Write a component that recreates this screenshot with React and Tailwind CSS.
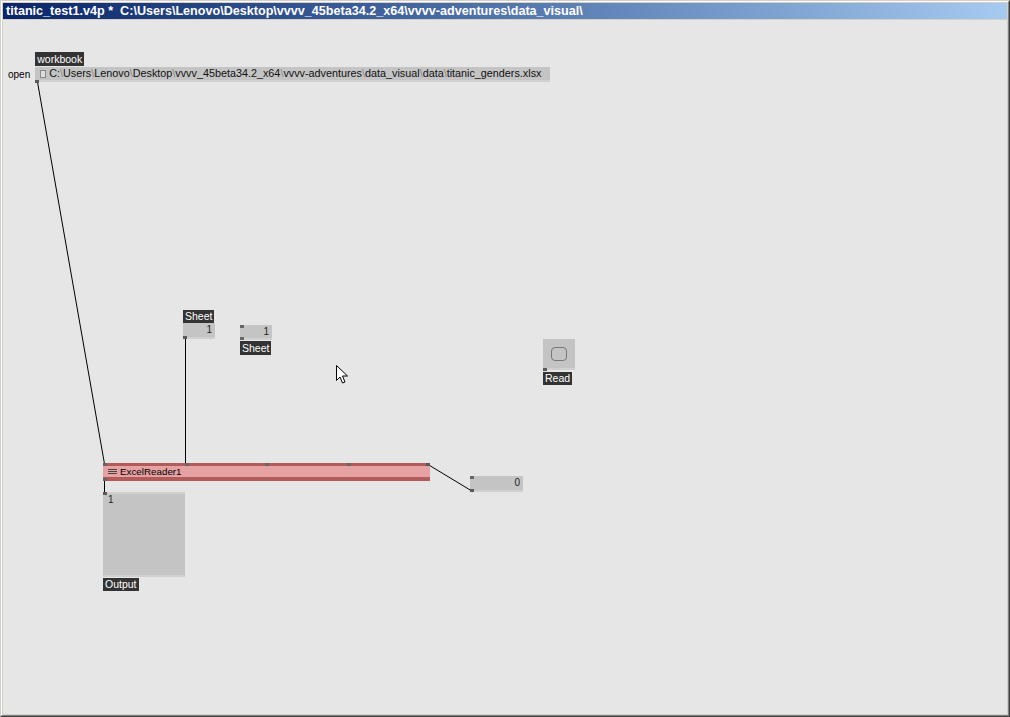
function Pin({ className = "" }) {
  return <div className={`absolute w-[4px] h-[3px] bg-[#5a5a5a] ${className}`} />;
}

function Label({ children, className = "" }) {
  return (
    <div className={`self-start h-[13px] px-[2px] bg-[#333] text-white text-[10.5px] leading-[13px] ${className}`}>
      {children}
    </div>
  );
}

const Sep = () => <span className="text-[#8a8a8a]">\</span>;

export default function App() {
  const font = { fontFamily: '"Liberation Sans", Arial, sans-serif' };
  return (
    <div
      className="w-[1010px] h-[717px] border border-t-[#d4d0c8] border-l-[#d4d0c8] border-r-[#404040] border-b-[#404040] bg-[#d4d0c8]"
      style={font}
    >
      <div className="w-full h-full border border-t-white border-l-white border-r-[#808080] border-b-[#808080] p-px flex flex-col">
        {/* title bar */}
        <div className="h-[16px] shrink-0 bg-gradient-to-r from-[#0a246a] to-[#a6caf0] flex items-center pl-[3px]">
          <span className="text-white font-bold text-[12.6px] leading-none whitespace-pre">
            {"titanic_test1.v4p *  C:\\Users\\Lenovo\\Desktop\\vvvv_45beta34.2_x64\\vvvv-adventures\\data_visual\\"}
          </span>
        </div>
        <div className="h-px shrink-0" />

        {/* patch canvas */}
        <div className="relative flex-1 bg-[#e6e6e6] overflow-hidden text-[10px]">
          <svg className="absolute inset-0" width="1004" height="693">
            <g stroke="#000" strokeWidth="1" fill="none" shapeRendering="crispEdges">
              <line x1="34.5" y1="62" x2="101.5" y2="444" shapeRendering="auto" />
              <line x1="182.5" y1="319" x2="182.5" y2="444" />
              <line x1="425" y1="444.5" x2="468" y2="470.5" shapeRendering="auto" />
              <line x1="101.5" y1="461" x2="101.5" y2="473" />
            </g>
          </svg>

          {/* workbook path iobox */}
          <div className="absolute left-[5px] top-[32px] flex items-end gap-[5px]">
            <span className="text-black leading-[13px] mb-px">open</span>
            <div className="flex flex-col gap-px">
              <Label className="h-[14px] leading-[14px]">workbook</Label>
              <div className="relative w-[515px] h-[15px] bg-[#c4c4c4] border-b-2 border-[#d0d0d0] flex items-center">
                <span className="ml-[5px] w-[6px] h-[8px] border border-[#888] bg-[#ddd]" />
                <span className="ml-[3px] text-[#111] text-[10.8px] leading-none whitespace-pre">
                  C:<Sep />Users<Sep />Lenovo<Sep />Desktop<Sep />vvvv_45beta34.2_x64<Sep />vvvv-adventures<Sep />data_visual<Sep />data<Sep />titanic_genders.xlsx
                </span>
                <Pin className="left-0 top-[13px]" />
              </div>
            </div>
          </div>

          {/* Sheet iobox 1 */}
          <div className="absolute left-[180px] top-[290px] flex flex-col">
            <Label>Sheet</Label>
            <div className="relative w-[32px] h-[16px] bg-[#c4c4c4] border-b-2 border-[#d0d0d0] flex items-center justify-end pr-[3px] text-[#222] leading-none">
              1
              <Pin className="left-0 top-[13px]" />
            </div>
          </div>

          {/* Sheet iobox 2 */}
          <div className="absolute left-[237px] top-[305px] flex flex-col gap-px">
            <div className="relative w-[32px] h-[15px] bg-[#c4c4c4] border-b-2 border-[#d0d0d0] flex items-center justify-end pr-[3px] text-[#222] leading-none">
              1
              <Pin className="left-0 top-0 bg-[#666]" />
              <Pin className="left-0 top-[12px] bg-[#666]" />
            </div>
            <Label className="h-[14px] leading-[14px]">Sheet</Label>
          </div>

          {/* cursor */}
          <svg className="absolute left-[333px] top-[345px]" width="13" height="20" viewBox="0 0 13 20">
            <path d="M0.5 0.5 L0.5 15.5 L4 12 L6.5 18 L9 17 L6.5 11 L11.5 11 Z" fill="#fff" stroke="#000" strokeWidth="1" />
          </svg>

          {/* Read bang */}
          <div className="absolute left-[540px] top-[319px] flex flex-col gap-[2px]">
            <div className="relative w-[32px] h-[31px] bg-[#c4c4c4] border-b-2 border-[#d0d0d0] flex items-center justify-center">
              <div className="w-[16px] h-[14px] rounded-[4px] border border-[#777]" />
              <Pin className="left-0 top-[29px]" />
            </div>
            <Label>Read</Label>
          </div>

          {/* ExcelReader node */}
          <div className="absolute left-[100px] top-[443px] w-[327px] h-[18px] bg-[#b35a5a] flex flex-col">
            <div className="h-[3px]" />
            <div className="h-[11px] bg-[#e6a2a2] flex items-center pl-[5px] gap-[3px]">
              <div className="flex flex-col gap-[1px]">
                <div className="w-[9px] h-px bg-[#444]" />
                <div className="w-[9px] h-px bg-[#444]" />
                <div className="w-[9px] h-px bg-[#444]" />
              </div>
              <span className="text-black text-[9.8px] leading-none">ExcelReader1</span>
            </div>
            <Pin className="left-0 top-0 bg-[#666]" />
            <Pin className="left-[82px] top-0 bg-[#666]" />
            <Pin className="left-[162px] top-0 bg-[#666]" />
            <Pin className="left-[244px] top-0 bg-[#666]" />
            <Pin className="left-[323px] top-0" />
            <Pin className="left-0 top-[15px] bg-[#666]" />
          </div>

          {/* output 0 */}
          <div className="absolute left-[467px] top-[456px] w-[53px] h-[16px] bg-[#c4c4c4] border-b-2 border-[#d0d0d0] flex items-center justify-end pr-[3px] text-[#222] leading-none">
            0
            <Pin className="left-0 top-0 bg-[#666]" />
            <Pin className="left-0 top-[13px]" />
          </div>

          {/* Output iobox */}
          <div className="absolute left-[100px] top-[472px] flex flex-col gap-px">
            <div className="relative w-[82px] h-[85px] bg-[#c4c4c4] border-t-2 border-b-2 border-[#d0d0d0] pl-[5px] pt-px text-[#222] leading-none">
              1
              <Pin className="left-0 -top-[2px]" />
            </div>
            <Label>Output</Label>
          </div>
        </div>
      </div>
    </div>
  );
}
